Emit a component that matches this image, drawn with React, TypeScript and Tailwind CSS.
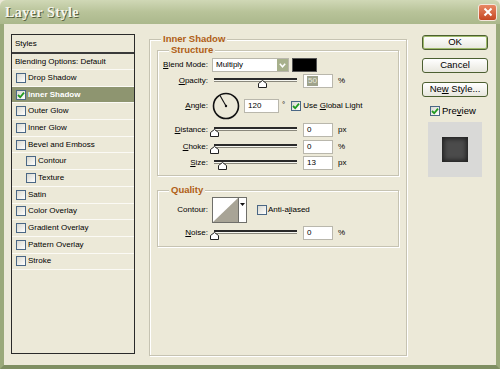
import React from "react";

const FONT = "font-['Liberation_Sans',Arial,sans-serif]";

function Check({ checked = false }: { checked?: boolean }) {
  return (
    <span className="inline-flex w-[10px] h-[10px] shrink-0 items-center justify-center border border-[#4a6785] bg-gradient-to-br from-[#d8d8d0] to-white">
      {checked && (
        <svg width="8" height="8" viewBox="0 0 8 8">
          <path d="M1 4 L3.2 6.2 L7 1.6" stroke="#1f9a1f" strokeWidth="1.8" fill="none" />
        </svg>
      )}
    </span>
  );
}

function U({ children }: { children: React.ReactNode }) {
  return <span className="underline underline-offset-1">{children}</span>;
}

function Slider({ pos }: { pos: number }) {
  return (
    <div className="relative ml-[2px] w-[83px] h-full">
      <div className="absolute left-0 right-0 top-[4px] h-[4px] border-t-2 border-[#2a2a2a] border-b border-b-[#8a887c] bg-[#f6f6f0]" />
      <svg
        className="absolute top-[6px]"
        style={{ left: pos }}
        width="9"
        height="8"
        viewBox="0 0 9 8"
      >
        <path d="M4.5 0.5 L8.5 3.5 L8.5 7.5 L0.5 7.5 L0.5 3.5 Z" fill="#fff" stroke="#222" strokeWidth="1" />
      </svg>
    </div>
  );
}

function Input({ value, w = 30, hl = false }: { value: string; w?: number; hl?: boolean }) {
  return (
    <div
      className="h-[14px] flex items-center border border-[#b9b7ac] bg-white pl-[3px] text-[8px] text-black"
      style={{ width: w }}
    >
      {hl ? <span className="bg-[#9fa38c] text-[#e8eadc] px-[1px] leading-[10px]">{value}</span> : value}
    </div>
  );
}

function Label({ children }: { children: React.ReactNode }) {
  return <div className="w-[50px] text-right text-[8px] text-black">{children}</div>;
}

function SliderRow({
  label,
  pos,
  value,
  unit,
  hl = false,
  mt,
}: {
  label: React.ReactNode;
  pos: number;
  value: string;
  unit: string;
  hl?: boolean;
  mt: string;
}) {
  return (
    <div className={`flex items-center h-[14px] ${mt}`}>
      <Label>{label}</Label>
      <div className="ml-[4px] h-full flex items-center">
        <Slider pos={pos} />
      </div>
      <div className="ml-[6px]">
        <Input value={value} hl={hl} />
      </div>
      <span className="ml-[5px] text-[8px] text-black">{unit}</span>
    </div>
  );
}

function Group({
  title,
  className,
  children,
}: {
  title: string;
  className: string;
  children?: React.ReactNode;
}) {
  return (
    <div className={`relative border border-[#c6c3b2] shadow-[inset_1px_1px_0_#fff,1px_1px_0_#fff] ${className}`}>
      <span className="absolute left-[11px] top-[-7px] px-[2px] bg-[#ece9d8] text-[9.5px] leading-[12px] font-bold text-[#b05e16]">
        {title}
      </span>
      {children}
    </div>
  );
}

function Button({ children, def = false, mt }: { children: React.ReactNode; def?: boolean; mt: string }) {
  return (
    <div
      className={`${mt} w-[66px] h-[15px] flex items-center justify-center rounded-[3px] border border-[#4c5f31] bg-gradient-to-b from-white to-[#e8e7de] text-[9.5px] text-black ${
        def ? "shadow-[inset_0_0_0_1px_#9fba6c]" : ""
      }`}
    >
      <span>{children}</span>
    </div>
  );
}

export default function App() {
  const rows: { label: string; indent?: boolean; sel?: boolean; checked?: boolean }[] = [
    { label: "Drop Shadow" },
    { label: "Inner Shadow", sel: true, checked: true },
    { label: "Outer Glow" },
    { label: "Inner Glow" },
    { label: "Bevel and Emboss" },
    { label: "Contour", indent: true },
    { label: "Texture", indent: true },
    { label: "Satin" },
    { label: "Color Overlay" },
    { label: "Gradient Overlay" },
    { label: "Pattern Overlay" },
    { label: "Stroke" },
  ];

  return (
    <div className={`${FONT} w-[500px] h-[369px] flex flex-col bg-[#ece9d8] overflow-hidden`}>
      {/* Title bar */}
      <div className="h-[24px] shrink-0 flex items-center justify-between rounded-t-[6px] bg-gradient-to-b from-[#d0d8b6] via-[#b8c399] to-[#abb88c] pl-[5px] pr-[3px]">
        <span className="font-['Liberation_Serif',serif] font-bold text-[14px] tracking-[0.5px] text-[#f6f6ee] [text-shadow:1px_1px_0_#56603e]">
          Layer Style
        </span>
        <div className="w-[19px] h-[17px] flex items-center justify-center rounded-[3px] border border-[#f3e7dc] bg-gradient-to-b from-[#e88763] to-[#c54722]">
          <svg width="10" height="10" viewBox="0 0 10 10">
            <path d="M1.5 1.5 L8.5 8.5 M8.5 1.5 L1.5 8.5" stroke="#fff" strokeWidth="2" />
          </svg>
        </div>
      </div>

      {/* Body */}
      <div className="flex-1 flex items-start border-l-[4px] border-r-[4px] border-b-[4px] border-[#9aa97a] border-b-[#7f8f62] pt-[10px] pl-[7px]">
        {/* Styles list */}
        <div className="w-[124px] h-[320px] shrink-0 border border-[#2a2a2a] flex flex-col text-[8px] text-black">
          <div className="h-[19px] shrink-0 flex items-center pl-[3px] border-b-2 border-[#3a3a3a]">Styles</div>
          <div className="h-[16px] shrink-0 flex items-center pl-[3px] border-b border-[#fbfaf5]">
            Blending Options: Default
          </div>
          {rows.map((r) => (
            <div
              key={r.label}
              className={`h-[16.7px] shrink-0 flex items-center gap-[2px] border-b border-[#fbfaf5] ${
                r.indent ? "pl-[14px]" : "pl-[4px]"
              } ${r.sel ? "bg-[#8e9570] text-white font-bold" : ""}`}
            >
              <Check checked={r.checked} />
              <span>{r.label}</span>
            </div>
          ))}
        </div>

        {/* Middle group */}
        <Group title="Inner Shadow" className="mt-[5px] ml-[14px] w-[258px] h-[317px] shrink-0">
          <Group title="Structure" className="ml-[7px] mt-[10px] w-[242px] h-[126px]">
            <div className="flex flex-col pt-[7px]">
              {/* Blend mode */}
              <div className="flex items-center h-[14px]">
                <Label>
                  <U>B</U>lend Mode:
                </Label>
                <div className="ml-[4px] w-[77px] h-[14px] flex items-center justify-between border border-[#b9b7ac] bg-white pl-[3px] text-[8px]">
                  <span>Multiply</span>
                  <div className="w-[11px] h-[12px] flex items-center justify-center bg-[#a7b08c]">
                    <svg width="7" height="5" viewBox="0 0 7 5">
                      <path d="M0.8 0.8 L3.5 3.8 L6.2 0.8" stroke="#fff" strokeWidth="1.5" fill="none" />
                    </svg>
                  </div>
                </div>
                <div className="ml-[3px] w-[25px] h-[14px] bg-black border border-[#555]" />
              </div>

              <SliderRow label={<><U>O</U>pacity:</>} pos={44} value="50" unit="%" hl mt="mt-[2px]" />

              {/* Angle */}
              <div className="flex items-center h-[28px] mt-[4px]">
                <Label>
                  <U>A</U>ngle:
                </Label>
                <svg className="ml-[4px]" width="28" height="28" viewBox="0 0 28 28">
                  <circle cx="14" cy="14" r="12.5" fill="none" stroke="#111" strokeWidth="1.6" />
                  <line x1="14" y1="14" x2="8" y2="3.6" stroke="#111" strokeWidth="1.1" />
                  <circle cx="14" cy="14" r="1.2" fill="#111" />
                </svg>
                <div className="ml-[4px]">
                  <Input value="120" w={35} />
                </div>
                <span className="ml-[3px] self-start mt-[7px] text-[8px]">°</span>
                <div className="ml-[6px] flex items-center gap-[2px] text-[8px]">
                  <Check checked />
                  <span>
                    Use <U>G</U>lobal Light
                  </span>
                </div>
              </div>

              <SliderRow label={<><U>D</U>istance:</>} pos={-4} value="0" unit="px" mt="mt-[3px]" />
              <SliderRow label={<><U>C</U>hoke:</>} pos={-4} value="0" unit="%" mt="mt-[3px]" />
              <SliderRow label={<><U>S</U>ize:</>} pos={4} value="13" unit="px" mt="mt-[2px]" />
            </div>
          </Group>

          <Group title="Quality" className="ml-[7px] mt-[14px] w-[242px] h-[57px]">
            <div className="flex flex-col pt-[6px]">
              <div className="flex items-center h-[26px]">
                <Label>Contour:</Label>
                <div className="ml-[4px] w-[35px] h-[26px] flex border border-[#6f6f6a] bg-white">
                  <svg width="25" height="24" viewBox="0 0 25 24">
                    <rect width="25" height="24" fill="#fff" />
                    <path d="M0 24 L25 0 L25 24 Z" fill="#a8a496" />
                  </svg>
                  <div className="flex-1 border-l border-[#6f6f6a] flex justify-center pt-[5px]">
                    <svg width="5" height="3" viewBox="0 0 5 3">
                      <path d="M0 0 L5 0 L2.5 3 Z" fill="#111" />
                    </svg>
                  </div>
                </div>
                <div className="ml-[10px] flex items-center gap-[1px] text-[8px]">
                  <Check />
                  <span>
                    Anti-a<U>l</U>iased
                  </span>
                </div>
              </div>
              <SliderRow label={<><U>N</U>oise:</>} pos={-4} value="0" unit="%" mt="mt-[3px]" />
            </div>
          </Group>
        </Group>

        {/* Right column */}
        <div className="ml-[15px] mt-[1px] w-[66px] flex flex-col">
          <Button def mt="mt-0">OK</Button>
          <Button mt="mt-[8px]">Cancel</Button>
          <Button mt="mt-[9px]">
            Ne<U>w</U> Style...
          </Button>
          <div className="mt-[7px] ml-[8px] flex items-center gap-[2px] text-[9.5px] text-black">
            <Check checked />
            <span>
              Pre<U>v</U>iew
            </span>
          </div>
          <div className="mt-[4px] ml-[6px] w-[54px] h-[55px] flex items-center justify-center bg-[#d9d9d7]">
            <div className="w-[26px] h-[25px] bg-[#4b4b4b] shadow-[inset_0_0_4px_2px_#222]" />
          </div>
        </div>
      </div>
    </div>
  );
}
